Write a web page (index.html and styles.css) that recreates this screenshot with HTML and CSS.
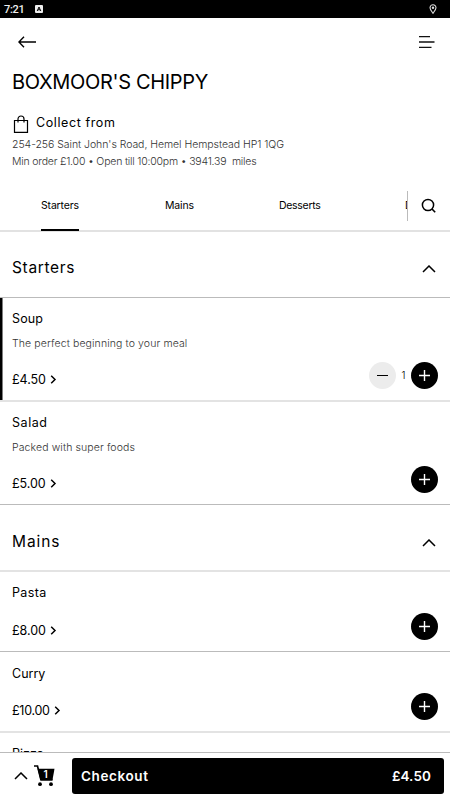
FILE: index.html
```
<!DOCTYPE html>
<html lang="en">
<head>
<meta charset="utf-8">
<title>Boxmoor's Chippy</title>
<link rel="stylesheet" href="styles.css">
</head>
<body>
<svg class="defs" aria-hidden="true">
  <symbol id="plus" viewBox="0 0 27 27"><path d="M8 13.5h11M13.5 8v11" fill="none" stroke="#fff" stroke-width="1.4"/></symbol>
  <symbol id="up" viewBox="0 0 14 8"><path d="M1 7l6-6 6 6" fill="none" stroke="#000" stroke-width="1.5"/></symbol>
  <symbol id="next" viewBox="0 0 7 9"><path d="M1.2 .8l3.8 3.7-3.8 3.7" fill="none" stroke="#000" stroke-width="1.5"/></symbol>
</svg>
<div class="app">
  <div class="status">
    <span class="time">7:21</span>
    <svg class="badge" viewBox="0 0 8 8"><rect width="8" height="8" rx="1" fill="#eee"/><path d="M2.2 6l1.8-4 1.8 4M3 4.8h2" fill="none" stroke="#000" stroke-width="1"/></svg>
    <svg class="pin" viewBox="0 0 8 10"><path d="M4 9.3C2.3 7 1 5.400 1 3.700a3 3 0 0 1 6 0C7 5.400 5.700 7 4 9.300z" fill="none" stroke="#ddd" stroke-width="1.100"/><circle cx="4" cy="3.700" r="1.200" fill="#ddd"/></svg>
  </div>
  <header class="top">
    <svg class="back" viewBox="0 0 18 12"><path d="M18 6H1M6 .8L.9 6 6 11.200" fill="none" stroke="#000" stroke-width="1.400"/></svg>
    <svg class="menu" viewBox="0 0 16 12"><path d="M0 .6h11M0 6h15.500M0 11.400h12.500" stroke="#111" stroke-width="1.300"/></svg>
  </header>
  <section class="info">
    <h1>BOXMOOR'S CHIPPY</h1>
    <div class="collect">
      <svg class="bag" viewBox="0 0 17 18"><path d="M2.500 5.500h13v11.800H2.500zM6 7.500V4a3 3 0 0 1 6 0v3.500" fill="none" stroke="#000" stroke-width="1.200"/></svg>
      <span>Collect from</span>
    </div>
    <p class="address">254-256 Saint John's Road, Hemel Hempstead HP1 1QG</p>
    <p class="terms">Min order £1.00 • Open till 10:00pm • 3941.39&nbsp; miles</p>
  </section>
  <nav class="tabs">
    <div class="tablist">
      <span class="tab active">Starters</span><span class="tab mains">Mains</span><span class="tab desserts">Desserts</span><span class="tab drinks">Drinks</span>
    </div>
    <div class="search"><svg viewBox="0 0 16 16"><circle cx="7" cy="7" r="5.600" fill="none" stroke="#000" stroke-width="1.500"/><path d="M11 11l3.200 3.200" stroke="#000" stroke-width="1.600"/></svg></div>
  </nav>
  <main>
    <div class="group"><h2>Starters</h2><svg class="up"><use href="#up"/></svg></div>
    <article class="item tall selected">
      <h3 class="soup">Soup</h3><p class="meal">The perfect beginning to your meal</p>
      <div class="buy"><span class="price">£4.50</span><svg class="next"><use href="#next"/></svg>
        <span class="minus"></span><span class="count">1</span><svg class="plus"><use href="#plus"/></svg></div>
    </article>
    <article class="item tall last">
      <h3 class="salad">Salad</h3><p>Packed with super foods</p>
      <div class="buy"><span class="price">£5.00</span><svg class="next"><use href="#next"/></svg><svg class="plus"><use href="#plus"/></svg></div>
    </article>
    <div class="group second"><h2 class="wide">Mains</h2><svg class="up"><use href="#up"/></svg></div>
    <article class="item short">
      <h3>Pasta</h3>
      <div class="buy"><span class="price">£8.00</span><svg class="next"><use href="#next"/></svg><svg class="plus"><use href="#plus"/></svg></div>
    </article>
    <article class="item short curry">
      <h3 class="curry-name">Curry</h3>
      <div class="buy"><span class="price ten">£10.00</span><svg class="next"><use href="#next"/></svg><svg class="plus"><use href="#plus"/></svg></div>
    </article>
    <article class="item short"><h3 class="pizza-name">Pizza</h3></article>
  </main>
  <footer>
    <svg class="up"><use href="#up"/></svg>
    <svg class="cart" viewBox="0 0 21 22"><path d="M0 1h3.500l3.400 13.700h11.600" fill="none" stroke="#000" stroke-width="1.700"/><path d="M3.600 3.800H20.500L18.400 15.500H6.600z"/><circle cx="6" cy="19.200" r="1.900"/><circle cx="17" cy="19.200" r="1.900"/><text x="11.600" y="13.300" text-anchor="middle">1</text></svg>
    <div class="checkout"><span>Checkout</span><span class="total">£4.50</span></div>
  </footer>
</div>
</body>
</html>
```
FILE: styles.css
```
* { box-sizing: border-box; margin: 0; padding: 0; }
body { font-family: Inter, "Liberation Sans", sans-serif; color: #000; background: #fff; }
svg { display: block; flex: none; }
.defs { display: none; }
.app { width: 450px; height: 800px; display: flex; flex-direction: column; overflow: hidden; }
.status { height: 18px; flex: none; background: #000; color: #eee; display: flex; align-items: center; padding: 0 13px 0 4px; }
.time { font: 500 11px/18px Roboto, sans-serif; letter-spacing: -.3px; width: 31px; padding-top: 1px; }
.badge { width: 8px; height: 8px; }
.pin { width: 8px; height: 10px; margin-left: auto; }
.top { height: 48px; flex: none; display: flex; justify-content: space-between; align-items: center; padding: 0 15px 0 18px; }
.back { width: 18px; height: 12px; }
.menu { width: 16px; height: 12px; }
.info { height: 114px; flex: none; padding-left: 12px; white-space: nowrap; }
h1 { font-size: 20px; line-height: 32px; font-weight: 400; letter-spacing: -.33px; }
.collect { display: flex; align-items: center; height: 20px; margin-top: 14px; font-size: 12.5px; letter-spacing: .6px; gap: 7px; }
.bag { width: 17px; height: 18px; margin-top: 3px; }
p { font-size: 10.5px; line-height: 17px; font-weight: 300; color: #333; letter-spacing: .11px; }
.address { margin-top: 4px; letter-spacing: -.05px; }
.terms { letter-spacing: -.2px; }
.tabs { height: 52px; flex: none; display: flex; border-bottom: 2px solid #e2e2e2; }
.tablist { width: 408px; display: flex; overflow: hidden; padding-left: 41px; margin-bottom: -1px; }
.tab { flex: none; font-size: 10.5px; line-height: 52px; letter-spacing: -.17px; margin-right: 86px; }
.active { width: 38px; border-bottom: 2px solid #000; }
.active { height: 51px; }
.mains { width: 29px; margin-right: 85px; }
.desserts { width: 41px; margin-right: 85px; letter-spacing: -.3px; }
.tabs .search { height: 30px; margin: 11px 0 0 -1px; border-left: 1px solid #bbb; padding: 7px 0 0 13px; position: relative; background: #fff; }
.search svg { width: 16px; height: 16px; }
main { flex: 1; min-height: 0; overflow: hidden; }
.group { height: 66px; display: flex; justify-content: space-between; align-items: center; padding: 7px 14px 0 12px; border-bottom: 1px solid #bbb; }
.second { height: 67px; padding-top: 9px; border-bottom: 2px solid #e3e3e3; }
h2 { font-size: 15.5px; line-height: 24px; font-weight: 400; letter-spacing: .65px; }
.wide { letter-spacing: .9px; }
.up { width: 14px; height: 8px; margin-top: 2px; }
.item { padding: 0 12px; display: flex; flex-direction: column; }
.tall { height: 104px; border-bottom: 2px solid #e3e3e3; padding-top: 12px; }
.selected { background: linear-gradient(#000, #000) left top / 2.5px 100% no-repeat border-box; border-bottom-color: #e3e3e3; }
.last { height: 103px; border-bottom: 1px solid #bbb; }
h3 { font-size: 12.5px; line-height: 18px; font-weight: 400; letter-spacing: .35px; }
.soup { letter-spacing: .15px; }
.salad { letter-spacing: .55px; }
.tall p { margin-top: 7px; }
.buy { display: flex; align-items: center; height: 27px; }
.tall .buy { margin-top: 10px; }
.price { font-size: 12.5px; line-height: 18px; letter-spacing: -.05px; margin-top: 8px; }
.ten { letter-spacing: -.27px; }
.next { width: 7px; height: 9px; margin: 8px 0 0 4px; }
.plus { width: 27px; height: 27px; border-radius: 50%; background: #000; margin-left: auto; }
.minus { width: 27px; height: 27px; border-radius: 50%; background: #ececec; margin-left: auto; display: flex; align-items: center; justify-content: center; }
.minus::before { content: ""; width: 11px; height: 1.500px; background: #000; }
.count { width: 15px; text-align: center; font-size: 10px; font-weight: 300; line-height: 20px; margin-top: -2px; }
.count + .plus { margin-left: 0; }
.short { height: 80px; border-bottom: 1px solid #bbb; padding-top: 12px; }
.curry { height: 81px; border-bottom: 2px solid #e3e3e3; padding-top: 13px; }
.short .buy { margin-top: 11px; }
.curry-name { letter-spacing: 0; }
.curry .buy { margin-top: 10px; }
.pizza-name { letter-spacing: 0; }
footer { height: 48px; flex: none; border-top: 1px solid #bbb; display: flex; align-items: center; padding: 0 6px 1px 14px; background: #fff; }
footer .up { margin-top: 0; }
.cart { width: 21px; height: 22px; margin-left: 6px; }
.cart text { font: 600 10px Inter, sans-serif; fill: #fff; }
.checkout { width: 372px; height: 36px; margin-left: auto; border-radius: 3px; background: #000; color: #fff; display: flex; align-items: center; justify-content: space-between; padding: 0 13px 0 9px; font-size: 13.5px; font-weight: 600; letter-spacing: .6px; }
.total { letter-spacing: .1px; }
```
